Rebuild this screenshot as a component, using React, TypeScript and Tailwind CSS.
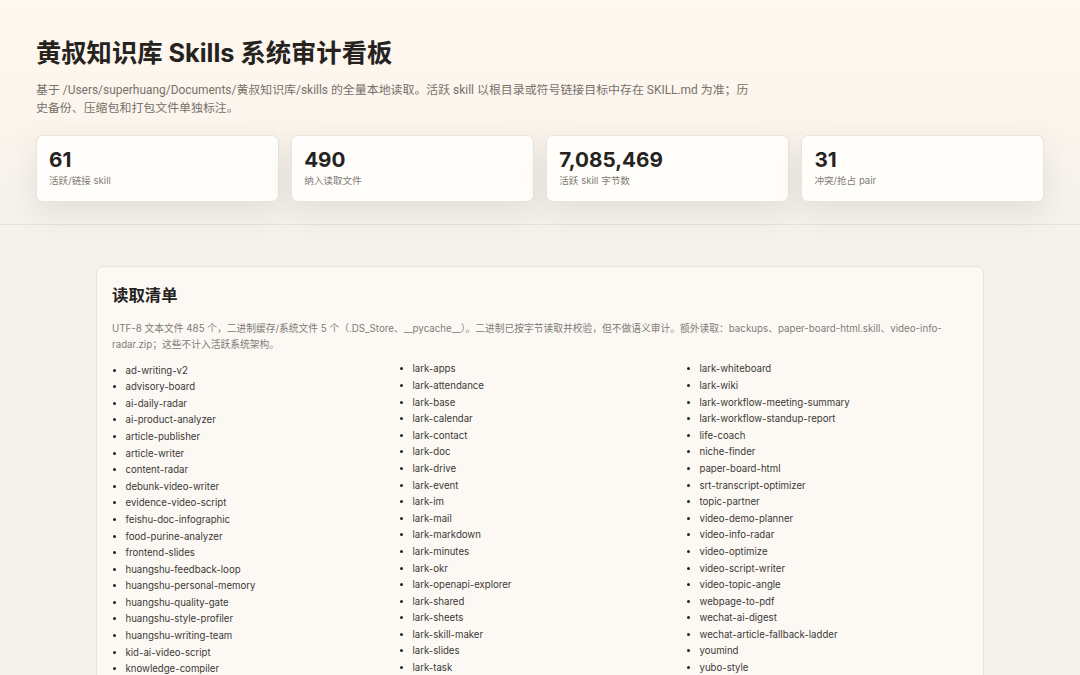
const stats = [
  { value: '61', label: '活跃/链接 skill' },
  { value: '490', label: '纳入读取文件' },
  { value: '7,085,469', label: '活跃 skill 字节数' },
  { value: '31', label: '冲突/抢占 pair' },
];

const columns = [
  [
    'ad-writing-v2', 'advisory-board', 'ai-daily-radar', 'ai-product-analyzer', 'article-publisher',
    'article-writer', 'content-radar', 'debunk-video-writer', 'evidence-video-script', 'feishu-doc-infographic',
    'food-purine-analyzer', 'frontend-slides', 'huangshu-feedback-loop', 'huangshu-personal-memory',
    'huangshu-quality-gate', 'huangshu-style-profiler', 'huangshu-writing-team', 'kid-ai-video-script',
    'knowledge-compiler',
  ],
  [
    'lark-apps', 'lark-attendance', 'lark-base', 'lark-calendar', 'lark-contact', 'lark-doc', 'lark-drive',
    'lark-event', 'lark-im', 'lark-mail', 'lark-markdown', 'lark-minutes', 'lark-okr', 'lark-openapi-explorer',
    'lark-shared', 'lark-sheets', 'lark-skill-maker', 'lark-slides', 'lark-task',
  ],
  [
    'lark-whiteboard', 'lark-wiki', 'lark-workflow-meeting-summary', 'lark-workflow-standup-report', 'life-coach',
    'niche-finder', 'paper-board-html', 'srt-transcript-optimizer', 'topic-partner', 'video-demo-planner',
    'video-info-radar', 'video-optimize', 'video-script-writer', 'video-topic-angle', 'webpage-to-pdf',
    'wechat-ai-digest', 'wechat-article-fallback-ladder', 'youmind', 'yubo-style',
  ],
];

export default function App() {
  return (
    <div className="h-[675px] overflow-hidden bg-[#f4f2ec] font-['Inter','Noto_Sans_CJK_SC',sans-serif] text-[#26231f]">
      {/* Header */}
      <header className="h-[225px] border-b border-[#e7e3da] bg-[linear-gradient(180deg,#fef9f0_0%,#fdf5ed_45%,#f4f2ec_100%)] px-9 pt-[36px]">
        <h1 className="text-[25.3px] leading-[34px] font-bold">黄叔知识库 Skills 系统审计看板</h1>
        <p className="mt-[11px] w-[720px] font-['Roboto','Noto_Sans_CJK_SC',sans-serif] text-[11.93px] leading-[18px] text-[#75716a]">
          基于 /Users/superhuang/Documents/黄叔知识库/skills 的全量本地读取。活跃 skill 以根目录或符号链接目标中存在 SKILL.md 为准；历史备份、压缩包和打包文件单独标注。
        </p>
        <div className="mt-[18px] grid grid-cols-4 gap-[12.5px]">
          {stats.map((s) => (
            <div
              key={s.label}
              className="h-[67px] rounded-[7px] border border-[#e8e4db] bg-[#fffefb] px-3 pt-[9.5px] shadow-[0_10px_30px_rgba(60,50,35,0.1)]"
            >
              <div className="text-[20.7px] leading-[28px] font-bold">{s.value}</div>
              <div className="mt-[0.5px] text-[9.6px] leading-[14px] text-[#807c75]">{s.label}</div>
            </div>
          ))}
        </div>
      </header>

      {/* Panel */}
      <section className="mx-auto mt-[41px] w-[888px] rounded-t-[7px] border border-[#e8e4db] bg-[#fcf9f5] px-[15px] pt-[17px]">
        <h2 className="text-[16.4px] leading-[22px] font-bold">读取清单</h2>
        <p className="mt-[15px] text-[9.75px] leading-[15.5px] text-[#807c75]">
          UTF-8 文本文件 485 个，二进制缓存/系统文件 5 个（.DS_Store、__pycache__）。二进制已按字节读取并校验，但不做语义审计。额外读取：backups、paper-board-html.skill、video-info-radar.zip；这些不计入活跃系统架构。
        </p>
        <div className="mt-[9.4px] grid grid-cols-[repeat(3,283px)] gap-x-1">
          {columns.map((items, i) => (
            <ul key={i} className={i === 0 ? 'list-disc pt-[1.2px] pl-[13.5px]' : 'list-disc pl-[13.5px]'}>
              {items.map((name) => (
                <li key={name} className="h-[16.6px] text-[9.62px] leading-[16.6px] text-[#3b3833] marker:text-[#26231f]">
                  {name}
                </li>
              ))}
            </ul>
          ))}
        </div>
      </section>
    </div>
  );
}
